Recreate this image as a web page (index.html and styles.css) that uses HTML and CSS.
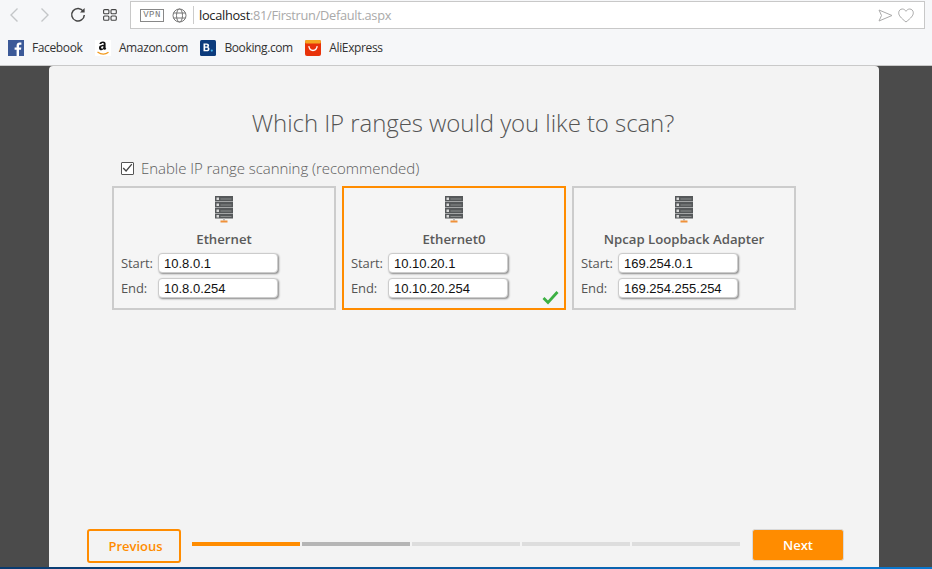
FILE: index.html
```html
<!DOCTYPE html>
<html lang="en">
<head>
<meta charset="utf-8">
<title>Which IP ranges would you like to scan?</title>
<link rel="stylesheet" href="styles.css">
</head>
<body>
<header class="chrome">
  <div class="toolbar">
    <svg class="nav nav-back" width="12" height="16" viewBox="0 0 12 16"><path d="M9.500 1.500 3 8l6.500 6.500" fill="none" stroke="#c4c6c8" stroke-width="1.400"/></svg>
    <svg class="nav nav-forward" width="12" height="16" viewBox="0 0 12 16"><path d="M2.500 1.500 9 8l-6.500 6.500" fill="none" stroke="#c4c6c8" stroke-width="1.400"/></svg>
    <svg class="nav nav-reload" width="16" height="16" viewBox="0 0 16 16"><path d="M13.300 4.300A6.300 6.300 0 1 0 14.300 8" fill="none" stroke="#444" stroke-width="1.500"/><path d="M14.600 1v4.600H10z" fill="#444"/></svg>
    <svg class="nav nav-grid" width="14" height="12" viewBox="0 0 14 12"><g fill="none" stroke="#444" stroke-width="1.100"><rect x=".6" y=".6" width="5.300" height="4.200" rx="1"/><rect x="8" y=".6" width="5.300" height="4.200" rx="1"/><rect x=".6" y="7" width="5.300" height="4.200" rx="1"/><rect x="8" y="7" width="5.300" height="4.200" rx="1"/></g></svg>
    <div class="address">
      <span class="vpn">VPN</span>
      <svg class="globe" width="15" height="15" viewBox="0 0 15 15"><g fill="none" stroke="#777" stroke-width="1"><circle cx="7.500" cy="7.500" r="6.500"/><ellipse cx="7.500" cy="7.500" rx="3" ry="6.500"/><path d="M1.500 5h12M1.500 10h12"/></g></svg>
      <span class="divider"></span>
      <span class="url"><span class="host">localhost</span>:81/Firstrun/Default.aspx</span>
      <svg class="send" width="15" height="13" viewBox="0 0 15 13"><path d="M1 1l13 5.500L1 12l2.500-5.500z" fill="none" stroke="#aaa" stroke-width="1"/></svg>
      <svg class="heart" width="16" height="15" viewBox="0 0 16 15"><path d="M8 14C3 10 .7 7.600.7 4.800.7 2.600 2.400 1 4.300 1 5.800 1 7.200 1.900 8 3.300 8.800 1.900 10.200 1 11.700 1c1.900 0 3.600 1.600 3.600 3.800C15.300 7.600 13 10 8 14z" fill="none" stroke="#aaa" stroke-width="1"/></svg>
    </div>
  </div>
  <nav class="bookmarks">
    <a class="bookmark">
      <svg class="favicon" width="16" height="16" viewBox="0 0 16 16"><rect width="16" height="16" fill="#3b5998"/><path d="M11 16V9.800h2l.3-2.400H11V5.900c0-.7.200-1.200 1.200-1.200h1.200V2.600c-.2 0-.9-.1-1.800-.1-1.800 0-3 1.100-3 3.100v1.800H6.600v2.400h2V16z" fill="#fff"/></svg>
      Facebook
    </a>
    <a class="bookmark">
      <svg class="favicon" width="16" height="16" viewBox="0 0 16 16"><rect width="16" height="16" fill="#fff"/><path d="M8 1.500c-2.200 0-3.400 1-3.600 2.400l2 .2c.1-.7.700-1 1.300-1 .8 0 1.100.4 1.100 1.200v.5c-2.500.1-4.800.7-4.800 3.100 0 1.500 1 2.300 2.300 2.300 1.100 0 1.800-.3 2.600-1.100.2.400.5.700.9 1l1.500-1.300c-.3-.3-.7-.7-.7-1.300V4.400C10.900 2.600 9.800 1.500 8 1.500zM7.100 8.700c-.6 0-1-.4-1-1.100 0-1.100 1-1.300 2.300-1.300v.5c0 1.100-.5 1.900-1.300 1.900z" fill="#111"/><path d="M2.500 12c3.500 2.500 8 2.500 11 .3" fill="none" stroke="#f29a1e" stroke-width="1.300"/></svg>
      Amazon.com
    </a>
    <a class="bookmark">
      <svg class="favicon" width="16" height="16" viewBox="0 0 16 16"><rect width="16" height="16" rx="1.500" fill="#0c3b7c"/><path d="M3.500 3.500h3.100c1.600 0 2.500.8 2.500 2 0 .8-.4 1.400-1 1.600.9.200 1.400.9 1.400 1.800 0 1.400-1 2.300-2.700 2.300H3.500zm1.700 1.300v1.800h1.200c.7 0 1-.3 1-.9s-.3-.9-1-.9zm0 3v2.100h1.500c.7 0 1.100-.4 1.100-1s-.4-1.100-1.100-1.100z" fill="#fff"/><circle cx="11.800" cy="10.600" r="1.100" fill="#46b4ea"/></svg>
      Booking.com
    </a>
    <a class="bookmark">
      <svg class="favicon" width="16" height="16" viewBox="0 0 16 16"><rect width="16" height="16" rx="2" fill="#e8320a"/><rect width="16" height="3.500" rx="1.500" fill="#f5a623"/><path d="M3.800 6.200C4.300 9.300 6 10.500 8 10.500s3.700-1.200 4.200-4.300" fill="none" stroke="#fff" stroke-width="1.300"/></svg>
      AliExpress
    </a>
  </nav>
</header>

<main class="stage">
  <section class="panel">
    <h1 class="title">Which IP ranges would you like to scan?</h1>
    <label class="enable">
      <span class="checkbox"><svg width="11" height="10" viewBox="0 0 11 10"><path d="M1.200 5l2.900 3L9.800 1.200" fill="none" stroke="#444" stroke-width="1.300"/></svg></span>
      Enable IP range scanning (recommended)
    </label>

    <div class="cards">
      <article class="card">
        <svg class="server" width="20" height="27" viewBox="0 0 20 27"><use href="#server-icon"/></svg>
        <h2 class="card-name">Ethernet</h2>
        <div class="field"><span class="field-label">Start:</span><input class="ip" value="10.8.0.1"></div>
        <div class="field"><span class="field-label">End:</span><input class="ip" value="10.8.0.254"></div>
      </article>
      <article class="card card-selected">
        <svg class="server" width="20" height="27" viewBox="0 0 20 27"><use href="#server-icon"/></svg>
        <h2 class="card-name">Ethernet0</h2>
        <div class="field"><span class="field-label">Start:</span><input class="ip" value="10.10.20.1"></div>
        <div class="field"><span class="field-label">End:</span><input class="ip" value="10.10.20.254"></div>
        <svg class="tick" width="17" height="15" viewBox="0 0 17 15"><path d="M1.500 8l4.500 4.500L15.500 2" fill="none" stroke="#3cb043" stroke-width="2.800"/></svg>
      </article>
      <article class="card">
        <svg class="server" width="20" height="27" viewBox="0 0 20 27"><use href="#server-icon"/></svg>
        <h2 class="card-name">Npcap Loopback Adapter</h2>
        <div class="field"><span class="field-label">Start:</span><input class="ip" value="169.254.0.1"></div>
        <div class="field"><span class="field-label">End:</span><input class="ip" value="169.254.255.254"></div>
      </article>
    </div>

    <footer class="wizard-nav">
      <button class="btn btn-prev">Previous</button>
      <div class="steps">
        <span class="step step-active"></span>
        <span class="step step-next"></span>
        <span class="step"></span>
        <span class="step"></span>
        <span class="step"></span>
      </div>
      <button class="btn btn-next">Next</button>
    </footer>
  </section>
</main>
<div class="taskbar"></div>

<svg class="defs" width="0" height="0">
  <defs>
    <g id="server-icon">
      <rect x="1" y="0" width="18" height="5.500" fill="#55585a"/>
      <rect x="1" y="6" width="18" height="5.500" fill="#55585a"/>
      <rect x="1" y="12" width="18" height="5.500" fill="#55585a"/>
      <rect x="1" y="18" width="18" height="4.500" fill="#55585a"/>
      <g fill="#d8d8d8"><rect x="2.500" y="1.500" width="2.500" height="2.500"/><rect x="2.500" y="7.500" width="2.500" height="2.500"/><rect x="2.500" y="13.500" width="2.500" height="2.500"/><rect x="2.500" y="19" width="2.500" height="2.500"/></g>
      <g fill="#8a8c8c"><rect x="6.500" y="2.500" width="11" height="1"/><rect x="6.500" y="8.500" width="11" height="1"/><rect x="6.500" y="14.500" width="11" height="1"/><rect x="6.500" y="20" width="11" height="1"/></g>
      <rect x="9" y="22.500" width="2" height="2" fill="#bbb"/>
      <rect x="6.500" y="24.500" width="7" height="2" fill="#f0913a"/>
    </g>
  </defs>
</svg>
</body>
</html>
```

FILE: styles.css
```css
* { box-sizing: border-box; }
html, body { margin: 0; height: 100%; }
body {
  display: flex;
  flex-direction: column;
  height: 569px;
  overflow: hidden;
  font-family: "Open Sans", "Noto Sans", sans-serif;
  background: #4b4b4b;
}
.defs { position: absolute; }

.chrome {
  height: 66px;
  flex: none;
  background: #f6f7f9;
  border-bottom: 1px solid #c9c9c9;
}
.toolbar {
  display: flex;
  align-items: center;
  height: 30px;
  padding: 1px 7px 1px 0;
}
.nav { flex: none; }
.nav-back { margin-left: 8px; }
.nav-forward { margin-left: 19px; }
.nav-reload { margin-left: 19px; }
.nav-grid { margin-left: 17px; }
.address {
  display: flex;
  align-items: center;
  flex: 1;
  height: 28px;
  margin-left: 13px;
  padding: 0 10px 0 9px;
  background: #fff;
  border: 1px solid #c8c8c8;
}
.vpn {
  width: 24px;
  height: 13px;
  border: 1px solid #888;
  color: #777;
  font: 9px/11px "Liberation Mono", monospace;
  letter-spacing: .4px;
  text-align: center;
}
.globe { margin-left: 8px; }
.divider {
  width: 1px;
  height: 18px;
  margin-left: 6px;
  background: #ccc;
}
.url {
  flex: 1;
  margin-left: 5px;
  font-size: 12.800px;
  letter-spacing: -0.3px;
  color: #a9a9a9;
  white-space: nowrap;
}
.host { color: #222; }
.send { margin-right: 5px; }

.bookmarks {
  display: flex;
  align-items: center;
  height: 35px;
  padding: 0 0 0 8px;
}
.bookmark {
  display: flex;
  align-items: center;
  gap: 8px;
  font-size: 12px;
  letter-spacing: -0.38px;
  color: #333;
  margin-right: 12.500px;
  white-space: nowrap;
}
.favicon { flex: none; }

.stage {
  flex: 1;
  min-height: 0;
  padding: 0 53px 0 49px;
}
.panel {
  display: flex;
  flex-direction: column;
  height: 100%;
  padding: 40px 35px 4px 38px;
  background: #f3f3f3;
  border-radius: 4px 4px 0 0;
}
.title {
  margin: 0;
  height: 34px;
  font-size: 24px;
  line-height: 34px;
  letter-spacing: -0.07px;
  font-weight: 300;
  text-align: center;
  color: #555;
  padding-right: 5px;
}
.enable {
  display: flex;
  align-items: center;
  gap: 7px;
  margin: 17px 0 0 34px;
  height: 22px;
  font-size: 15px;
  letter-spacing: -0.05px;
  font-weight: 300;
  color: #5c5c5c;
}
.checkbox {
  display: flex;
  align-items: center;
  justify-content: center;
  width: 13px;
  height: 13px;
  border: 1px solid #555;
  background: #fff;
  border-radius: 1px;
}
.cards {
  display: flex;
  gap: 6px;
  margin: 7px 0 0 25px;
}
.card {
  position: relative;
  display: flex;
  flex-direction: column;
  align-items: center;
  width: 224px;
  height: 124px;
  padding: 8px 0 0;
  background: #f5f5f5;
  border: 2px solid #cccccc;
}
.card-selected { border-color: #ff8c00; }
.server { flex: none; }
.card-name {
  margin: 7px 0 0;
  height: 18px;
  font-size: 13.200px;
  line-height: 18px;
  font-weight: 600;
  color: #5a5a5a;
}
.field {
  display: flex;
  align-items: center;
  align-self: flex-start;
  height: 20px;
  margin: 0 0 5px 7px;
}
.card-name + .field { margin-top: 5px; }
.field-label {
  width: 37px;
  font-size: 13px;
  letter-spacing: -0.1px;
  color: #555;
}
.ip {
  width: 120px;
  height: 20px;
  padding: 0 5px;
  background: #fff;
  border: 1px solid #ccc;
  border-radius: 4px;
  box-shadow: 1px 1px 2px #888;
  font: 13px "Liberation Sans", Arial, sans-serif;
  color: #111;
}
.tick {
  position: absolute;
  right: 5px;
  bottom: 3px;
}
.wizard-nav {
  display: flex;
  align-items: flex-start;
  margin-top: auto;
}
.btn {
  font-family: inherit;
  font-size: 13px;
  font-weight: 600;
  border-radius: 3px;
}
.btn-prev {
  width: 94px;
  height: 34px;
  padding: 0 0 0 3px;
  background: transparent;
  border: 2px solid #ff8c00;
  color: #ff8c00;
}
.btn-next {
  width: 92px;
  height: 32px;
  margin-left: 12px;
  padding: 0;
  background: #ff8c00;
  border: 1px solid #d9d9d9;
  color: #fff;
}
.steps {
  display: flex;
  gap: 2px;
  margin: 13px 0 0 11px;
}
.step {
  width: 108px;
  height: 4px;
  background: #dddddd;
}
.step-active { background: #ff8c00; }
.step-next { background: #b5b5b5; }
.taskbar {
  flex: none;
  height: 2px;
  background: linear-gradient(90deg, #0a3a6e, #0a78d0);
}
```
